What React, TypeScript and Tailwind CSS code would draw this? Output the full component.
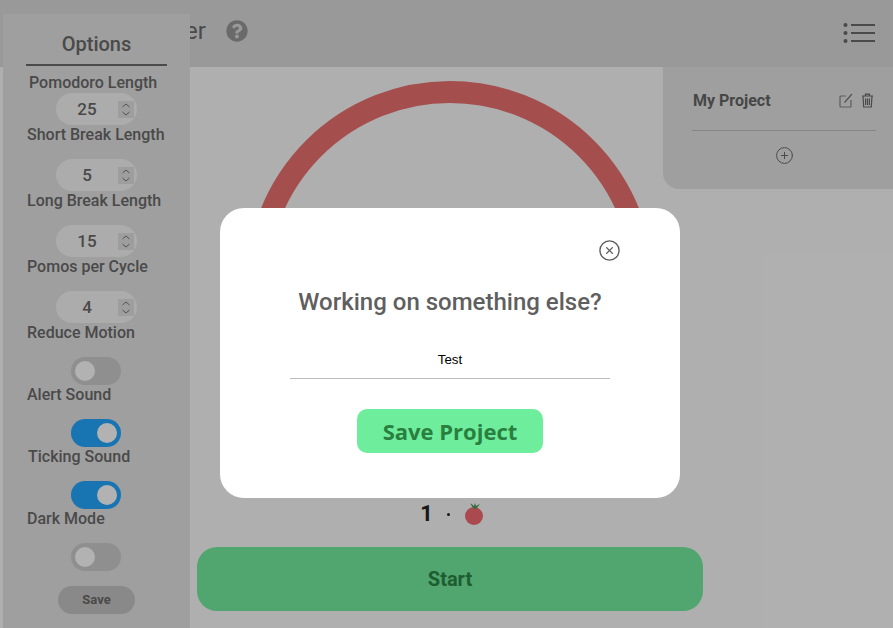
import React, { useState } from 'react';
import { CirclePlus, CircleX } from 'lucide-react';
import { FaQuestionCircle } from 'react-icons/fa';

const roboto = { fontFamily: 'Roboto, sans-serif' };

function NumberField({ value }: { value: number }) {
  return (
    <div className="relative ml-[29px] flex h-8 w-[81px] items-center rounded-full bg-[#f6f6f6]">
      <span className="w-[62px] text-center text-[17px] font-medium leading-none text-[#6a6a6a]">{value}</span>
      <div className="flex h-[17px] w-[16px] flex-col items-center justify-center bg-[#e2e2e2]">
        <svg width="10" height="15" viewBox="0 0 10 15" fill="none" stroke="#777" strokeWidth="1">
          <path d="M1.5 5 L5 2 L8.5 5" />
          <path d="M1.5 10 L5 13 L8.5 10" />
        </svg>
      </div>
    </div>
  );
}

function Toggle({ on }: { on: boolean }) {
  return (
    <div
      className={`ml-[44px] flex h-7 w-[50px] items-center rounded-full px-1 ${
        on ? 'justify-end bg-[#24a6ff]' : 'justify-start bg-[#cdcdcd]'
      }`}
    >
      <div className="h-5 w-5 rounded-full bg-white" />
    </div>
  );
}

function Label({ children, className = '' }: { children: React.ReactNode; className?: string }) {
  return <div className={`h-5 text-[16px] font-medium leading-5 text-[#6a6a6a] ${className}`}>{children}</div>;
}

function ListIcon() {
  return (
    <svg width="32" height="22" viewBox="0 0 32 22" fill="#6a6a6a" stroke="#6a6a6a">
      <circle cx="2.5" cy="3" r="2" stroke="none" />
      <circle cx="2.5" cy="11" r="2" stroke="none" />
      <circle cx="2.5" cy="19" r="2" stroke="none" />
      <path d="M8 3 H32 M8 11 H32 M8 19 H32" strokeWidth="2" />
    </svg>
  );
}

function EditIcon() {
  return (
    <svg width="14" height="15" viewBox="0 0 14 15" fill="none" stroke="#858585" strokeWidth="1.2">
      <path d="M7 3 H2 Q1 3 1 4 V13 Q1 14 2 14 H11 Q12 14 12 13 V7" />
      <path d="M5.5 9.5 L13 1" stroke="#777" />
    </svg>
  );
}

function TrashIcon() {
  return (
    <svg width="13" height="15" viewBox="0 0 13 15" fill="none" stroke="#6a6a6a" strokeWidth="1.2">
      <path d="M1 3 H12 M4.5 3 V1.2 H8.5 V3" />
      <path d="M2 3 L2.7 14 H10.3 L11 3" />
      <path d="M4.6 5.5 V12 M6.5 5.5 V12 M8.4 5.5 V12" />
    </svg>
  );
}

function Tomato() {
  return (
    <svg width="20" height="24" viewBox="0 0 20 24">
      <circle cx="10" cy="14" r="9" fill="#f56a70" />
      <path d="M9 6 L6 1 L10 4 L11 1 L12 4 L16 2 L12 7 Z" fill="#4f9a5c" />
    </svg>
  );
}

export default function App() {
  const [project, setProject] = useState('Test');

  return (
    <div className="relative h-[628px] w-[893px] overflow-hidden bg-[#fbfbfb]" style={roboto}>
      <header className="flex h-[67px] items-center justify-between bg-[#dbdbdb] pl-[26px] pr-[18px]">
        <div className="flex items-center gap-5 pb-[6px]">
          <h1 className="text-[24px] leading-none text-[#6a6a6a]">Pomodoro Timer</h1>
          <FaQuestionCircle size={22} color="#999" />
        </div>
        <div className="pb-[2px]">
          <ListIcon />
        </div>
      </header>

      <main className="flex flex-col items-center pl-[7px] pt-[14px]">
        <div className="h-[408px] w-[408px] rounded-full border-[22px] border-[#ec7070]" />
        <div className="mt-[13px] flex h-6 items-center gap-[14px] pl-1">
          <span className="text-[22px] font-bold leading-none text-[#222]">1</span>
          <span className="h-[3px] w-[3px] rounded-full bg-[#222]" />
          <Tomato />
        </div>
        <button className="mt-[21px] h-16 w-[506px] rounded-[20px] bg-[#75ed9f] text-[20px] font-bold text-[#2b8646]">
          Start
        </button>
      </main>

      {/* Options drawer */}
      <aside className="absolute bottom-0 left-[3px] top-[14px] w-[187px] bg-[#e4e4e4]">
        <h2 className="mx-[23px] mt-[16px] h-9 w-[141px] border-b-2 border-[#6a6a6a] text-center text-[20px] font-medium leading-7 text-[#6a6a6a]">
          Options
        </h2>
        <div className="mt-[7px] flex flex-col pl-6">
          <Label className="pl-[2px]">Pomodoro Length</Label>
          <NumberField value={25} />
          <Label>Short Break Length</Label>
          <div className="h-[14px]" />
          <NumberField value={5} />
          <Label>Long Break Length</Label>
          <div className="h-[14px]" />
          <NumberField value={15} />
          <Label>Pomos per Cycle</Label>
          <div className="h-[14px]" />
          <NumberField value={4} />
          <Label>Reduce Motion</Label>
          <div className="h-[14px]" />
          <Toggle on={false} />
          <Label>Alert Sound</Label>
          <div className="h-[14px]" />
          <Toggle on />
          <Label className="pl-px">Ticking Sound</Label>
          <div className="h-[14px]" />
          <Toggle on />
          <Label>Dark Mode</Label>
          <div className="h-[14px]" />
          <Toggle on={false} />
          <button className="ml-[31px] mt-[15px] h-7 w-[77px] rounded-full bg-[#c5c5c5] text-[13px] font-bold text-[#6a6a6a]">
            Save
          </button>
        </div>
      </aside>

      {/* Projects panel */}
      <section className="absolute right-0 top-[67px] h-[122px] w-[230px] rounded-bl-2xl bg-[#e4e4e4] pl-[29px] pr-[17px]">
        <div className="flex h-[64px] items-center justify-between border-b border-[#c0c0c0] pl-px pr-[2px] pt-1">
          <span className="text-[16px] font-bold text-[#666]">My Project</span>
          <div className="flex items-center gap-2">
            <EditIcon />
            <TrashIcon />
          </div>
        </div>
        <div className="flex justify-center pt-[15px]">
          <CirclePlus size={19} strokeWidth={1.2} color="#666" />
        </div>
      </section>

      {/* Modal overlay */}
      <div className="absolute inset-0 flex items-start justify-center bg-black/30 pl-[7px] pt-[208px]">
        <div className="flex h-[290px] w-[460px] flex-col items-center rounded-3xl bg-white">
          <div className="flex w-[320px] justify-end pt-[31px]">
            <CircleX size={23} strokeWidth={1.4} color="#5c5c5c" className="-mr-[11px]" />
          </div>
          <h2 className="mt-[24px] text-[24px] font-medium leading-8 text-[#5f5f5f]">Working on something else?</h2>
          <input
            value={project}
            onChange={(e) => setProject(e.target.value)}
            className="mt-[22px] h-[39px] w-[320px] border-b border-[#bbb] text-center text-[13.33px] text-black outline-none"
            style={{ fontFamily: '"Liberation Sans", sans-serif' }}
          />
          <button
            className="mt-[30px] h-11 w-[186px] rounded-[10px] bg-[#6eee9c] text-[22px] font-bold text-[#2a7f40]"
            style={{ fontFamily: '"Open Sans", sans-serif' }}
          >
            Save Project
          </button>
        </div>
      </div>
    </div>
  );
}
